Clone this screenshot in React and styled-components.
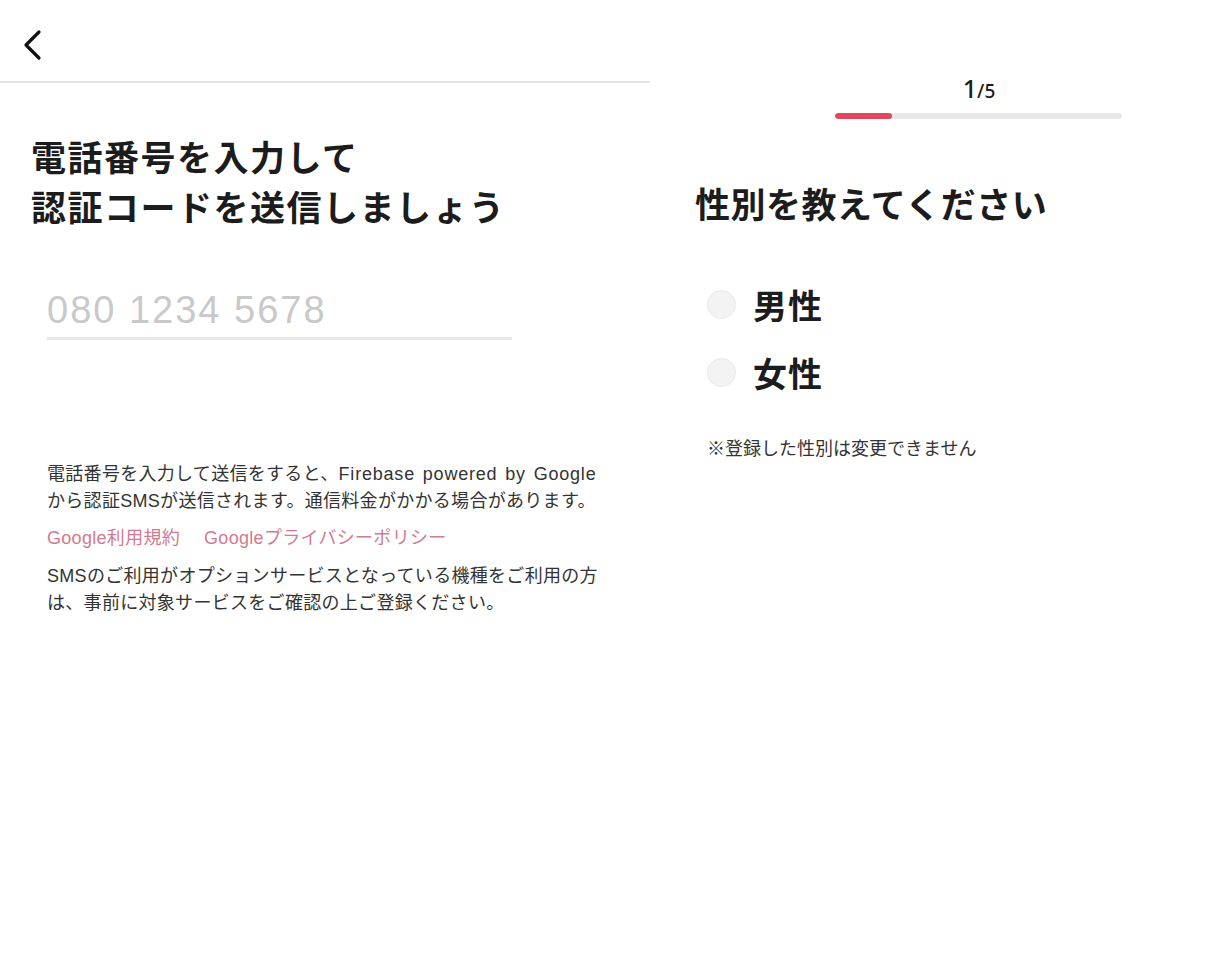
import React from 'react'
import styled, { createGlobalStyle } from 'styled-components'

const GlobalStyle = createGlobalStyle`
    html, body {
        margin: 0;
        padding: 0;
        background: #fff;
    }

    body {
        font-family: "Noto Sans CJK JP", "Noto Sans", sans-serif;
        color: #1a1a1a;
    }
`

const Page = styled.div`
    display: flex;
    width: 1222px;
    min-height: 960px;
    background: #fff;
`

const LeftPane = styled.div`
    width: 650px;
    flex-shrink: 0;
`

const Header = styled.div`
    height: 83px;
    display: flex;
    align-items: center;
    padding: 8px 0 0 22px;
    box-sizing: border-box;
    border-bottom: 2px solid #e4e4e4;
`

const BackButton = styled.button`
    border: none;
    background: none;
    padding: 0;
    width: 24px;
    height: 34px;
    display: flex;
    align-items: center;
    cursor: pointer;
`

const Title = styled.h1`
    margin: ${p => p.top || 0}px 0 0 ${p => p.left || 0}px;
    font-size: 35px;
    line-height: 50px;
    font-weight: 700;
    color: #1c1c1c;
    letter-spacing: ${p => p.spacing || 0.5}px;
`

const PhoneField = styled.div`
    margin: 56px 0 0 47px;
    width: 465px;
    border-bottom: 3px solid #e8e8e8;
    padding-bottom: 4px;
`

const PhoneInput = styled.input`
    border: none;
    outline: none;
    padding: 0;
    width: 100%;
    font-family: "Liberation Sans", Arial, sans-serif;
    font-size: 38px;
    line-height: 46px;
    letter-spacing: 2px;
    color: #333;
    background: transparent;

    &::placeholder {
        color: #c9c9c9;
    }
`

const Notes = styled.div`
    margin: 121px 0 0 47px;
    font-family: "Liberation Sans", "Noto Sans CJK JP", sans-serif;
    font-size: 18px;
    line-height: 27px;
    color: #333;
    letter-spacing: 0.3px;
    white-space: nowrap;
`

const Para = styled.p`
    margin: 0;
`

const Latin = styled.span`
    letter-spacing: 0.8px;
    word-spacing: 2px;
`

const Links = styled.div`
    display: flex;
    gap: 24px;
    margin: 10px 0 11px;
`

const TermLink = styled.a`
    color: #d27a90;
    text-decoration: none;
`

const RightPane = styled.div`
    flex: 1;
    padding-left: 45px;
`

const Progress = styled.div`
    margin: 73px 0 0 140px;
    width: 287px;
    display: flex;
    flex-direction: column;
    align-items: center;
`

const Counter = styled.div`
    font-family: "Noto Sans", "Liberation Sans", sans-serif;
    font-weight: 500;
    line-height: 30px;
    color: #1c1c1c;
    padding-left: 1px;
`

const Current = styled.span`
    font-size: 25px;
`

const Total = styled.span`
    font-size: 19px;
`

const Track = styled.div`
    margin-top: 6px;
    width: 100%;
    height: 6px;
    border-radius: 3px;
    background: #e8e8e8;
    overflow: hidden;
`

const Fill = styled.div`
    height: 100%;
    background: #e3475e;
    border-radius: 3px;
`

const Options = styled.div`
    margin: 52px 0 0 12px;
    display: flex;
    flex-direction: column;
    gap: 20px;
`

const Option = styled.label`
    display: flex;
    align-items: center;
    gap: 17px;
    height: 48px;
    cursor: pointer;
`

const Radio = styled.span`
    width: 27px;
    height: 27px;
    border-radius: 50%;
    background: #f3f3f3;
    border: 1px solid #e9e9e9;
    flex-shrink: 0;
`

const OptionLabel = styled.span`
    font-size: 34px;
    font-weight: 700;
    color: #1c1c1c;
    letter-spacing: 1px;
`

const Caution = styled.p`
    margin: 38px 0 0 12px;
    font-size: 18px;
    color: #333;
`

const ChevronLeft = () => (
    <svg width="20" height="32" viewBox="0 0 20 32" fill="none">
        <path d="M17 3 L4 16 L17 29" stroke="#111" strokeWidth="3.2" strokeLinecap="round" strokeLinejoin="round" />
    </svg>
)

const step = 1
const steps = 5

const App = () => (
    <>
        <GlobalStyle />
        <Page>
            <LeftPane>
                <Header>
                    <BackButton aria-label="戻る">
                        <ChevronLeft />
                    </BackButton>
                </Header>
                <Title top={48} left={31} spacing={1.5}>
                    電話番号を入力して<br />認証コードを送信しましょう
                </Title>
                <PhoneField>
                    <PhoneInput type="tel" placeholder="080 1234 5678" />
                </PhoneField>
                <Notes>
                    <Para>
                        電話番号を入力して送信をすると、<Latin>Firebase powered by Google</Latin><br />
                        から認証SMSが送信されます。通信料金がかかる場合があります。
                    </Para>
                    <Links>
                        <TermLink href="#">Google利用規約</TermLink>
                        <TermLink href="#">Googleプライバシーポリシー</TermLink>
                    </Links>
                    <Para>
                        SMSのご利用がオプションサービスとなっている機種をご利用の方<br />
                        は、事前に対象サービスをご確認の上ご登録ください。
                    </Para>
                </Notes>
            </LeftPane>
            <RightPane>
                <Progress>
                    <Counter>
                        <Current>{step}</Current>
                        <Total>/{steps}</Total>
                    </Counter>
                    <Track>
                        <Fill style={{ width: `${(step / steps) * 100}%` }} />
                    </Track>
                </Progress>
                <Title top={59}>性別を教えてください</Title>
                <Options>
                    <Option>
                        <Radio />
                        <OptionLabel>男性</OptionLabel>
                    </Option>
                    <Option>
                        <Radio />
                        <OptionLabel>女性</OptionLabel>
                    </Option>
                </Options>
                <Caution>※登録した性別は変更できません</Caution>
            </RightPane>
        </Page>
    </>
)

export default App
